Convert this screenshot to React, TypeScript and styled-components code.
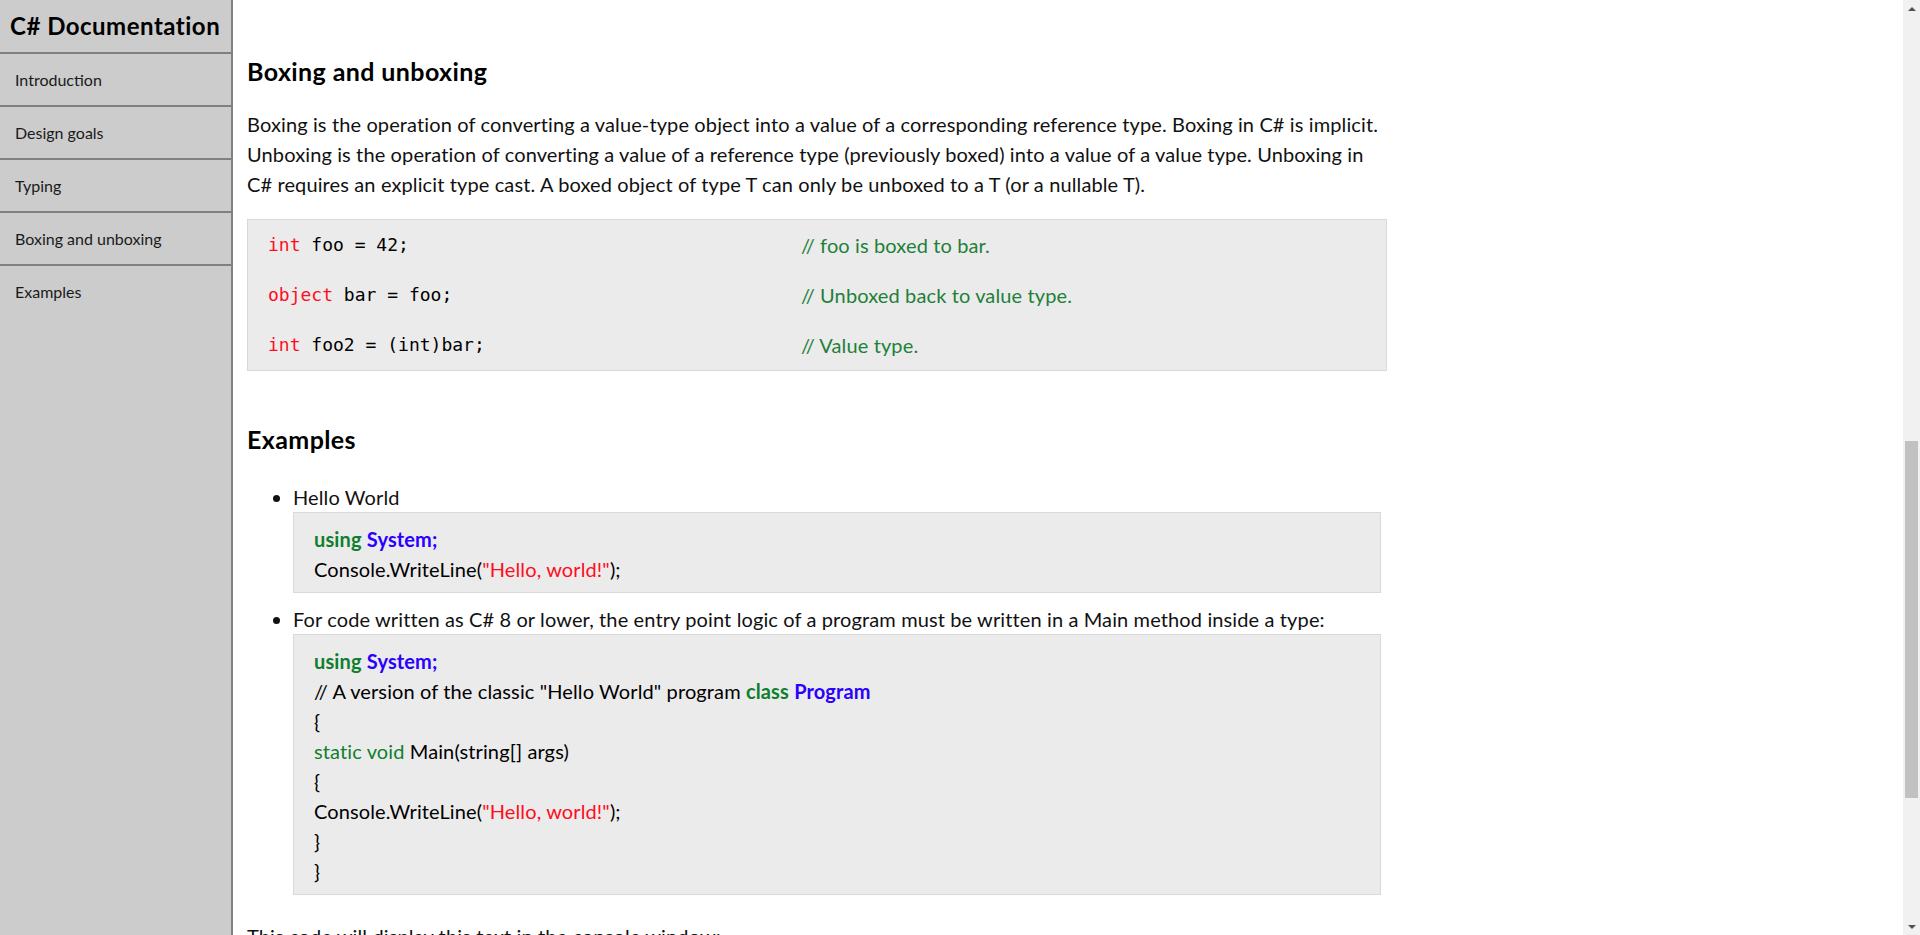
import React, { useLayoutEffect, useRef } from "react";
import styled, { createGlobalStyle } from "styled-components";

const GlobalStyle = createGlobalStyle`
  html {
    background: #ffffff;
  }
  body {
    margin: 0;
    font-family: Lato, "Open Sans", sans-serif;
    color: #111111;
    background: #ffffff;
    letter-spacing: 0.12px;
  }
`;

const Page = styled.div`
  display: block;
`;

const Sidebar = styled.nav`
  position: fixed;
  top: 0;
  left: 0;
  bottom: 0;
  width: 231px;
  background: #cccccc;
  border-right: 2px solid #808080;
  display: flex;
  flex-direction: column;
`;

const SidebarHeader = styled.header`
  padding: 10px 10px;
  font-size: 24px;
  line-height: 32px;
  font-weight: 700;
  letter-spacing: 0.5px;
  white-space: nowrap;
  color: #000000;
  border-bottom: 2px solid #808080;
`;

const NavLink = styled.a`
  display: block;
  padding: 15px 15px;
  font-size: 16px;
  line-height: 21px;
  letter-spacing: 0;
  color: #1a1a1a;
  text-decoration: none;

  & + & {
    border-top: 2px solid #808080;
  }
`;

const ScrollRail = styled.div`
  position: fixed;
  top: 0;
  right: 0;
  bottom: 0;
  width: 17px;
  background: #f1f1f1;
  display: flex;
  flex-direction: column;
`;

const RailButton = styled.div`
  height: 17px;
  display: flex;
  align-items: center;
  justify-content: center;
  flex: none;
`;

const RailThumb = styled.div<{ $offset: number; $size: number }>`
  margin: ${(p) => p.$offset}px 2px 0;
  height: ${(p) => p.$size}px;
  background: #c1c1c1;
  flex: none;
`;

const RailSpacer = styled.div`
  flex: 1;
`;

const Main = styled.main`
  margin-left: 233px;
  padding: 20px 14px 260px;
`;

const Content = styled.div`
  width: 1140px;
`;

const Section = styled.section`
  display: block;
`;

const SectionTitle = styled.h2`
  margin: 54px 0 23px;
  font-size: 25px;
  line-height: 29px;
  font-weight: 700;
  letter-spacing: 0.4px;
  color: #000000;
`;

const Paragraph = styled.p`
  margin: 0 0 20px;
  font-size: 20px;
  line-height: 30px;
`;

const InlineCode = styled.code`
  font-family: "DejaVu Sans Mono", monospace;
  font-size: 16px;
  letter-spacing: 0;
  padding: 2px 5px;
  background: #ebebeb;
  border: 1px solid #d9d9d9;
`;

const CodeTable = styled.div`
  display: grid;
  grid-template-columns: 533px 1fr;
  grid-auto-rows: 50px;
  align-items: center;
  margin: 0 0 20px;
  padding: 0 20px;
  background: #ebebeb;
  border: 1px solid #d9d9d9;
`;

const MonoCell = styled.span`
  font-family: "DejaVu Sans Mono", monospace;
  font-size: 18px;
  line-height: 30px;
  letter-spacing: 0;
  color: #000000;
  white-space: pre;
`;

const CommentCell = styled.span`
  font-size: 20px;
  line-height: 30px;
  color: #1f8039;
`;

const Keyword = styled.span<{ $tone: "red" | "green" | "blue"; $bold?: boolean }>`
  color: ${(p) =>
    p.$tone === "red" ? "#ff0d1e" : p.$tone === "green" ? "#0f7f2d" : "#2a00ff"};
  font-weight: ${(p) => (p.$bold ? 700 : 400)};
`;

const BulletList = styled.ul`
  margin: 28px 6px 26px 0;
  padding-left: 46px;
  list-style: disc;
`;

const BulletItem = styled.li`
  font-size: 20px;
  line-height: 30px;

  & + & {
    margin-top: 11px;
  }
`;

const ExampleCode = styled.div`
  padding: 11px 20px 8px;
  background: #ebebeb;
  border: 1px solid #d9d9d9;
  font-size: 20px;
  line-height: 30px;
  color: #000000;
`;

const CodeLine = styled.div`
  white-space: pre;
`;

const navItems = ["Introduction", "Design goals", "Typing", "Boxing and unboxing", "Examples"];

function Arrow({ up }: { up: boolean }) {
  return (
    <svg width="8" height="4" viewBox="0 0 8 4" aria-hidden="true">
      <polygon points={up ? "0,4 4,0 8,4" : "0,0 4,4 8,0"} fill="#505050" />
    </svg>
  );
}

export default function App() {
  const boxingRef = useRef<HTMLHeadingElement>(null);

  useLayoutEffect(() => {
    const el = boxingRef.current;
    if (el) {
      const top = el.getBoundingClientRect().top + window.scrollY - 57;
      window.scrollTo(0, top);
    }
  }, []);

  return (
    <Page>
      <GlobalStyle />
      <Sidebar id="navbar">
        <SidebarHeader>C# Documentation</SidebarHeader>
        {navItems.map((item) => (
          <NavLink key={item} href={`#${item.replace(/ /g, "_")}`}>
            {item}
          </NavLink>
        ))}
      </Sidebar>
      <ScrollRail aria-hidden="true">
        <RailButton>
          <Arrow up />
        </RailButton>
        <RailThumb $offset={424} $size={357} />
        <RailSpacer />
        <RailButton>
          <Arrow up={false} />
        </RailButton>
      </ScrollRail>
      <Main id="main-doc">
        <Content>
          <Section id="Introduction">
            <SectionTitle>Introduction</SectionTitle>
            <Paragraph>
              C# (pronounced "See Sharp") is a modern, object-oriented, and type-safe programming language. C# enables
              developers to build many types of secure and robust applications that run in .NET. C# has its roots in the C
              family of languages and will be immediately familiar to C, C++, Java, and JavaScript programmers.
            </Paragraph>
            <Paragraph>
              C# is an object-oriented, component-oriented programming language. C# provides language constructs to
              directly support these concepts, making C# a natural language in which to create and use software
              components. Since its origin, C# has added features to support new workloads and emerging software design
              practices.
            </Paragraph>
            <Paragraph>
              The most recent version of the language is C# 11, which was released in 2022 in .NET 7.0.
            </Paragraph>
          </Section>
          <Section id="Design_goals">
            <SectionTitle>Design goals</SectionTitle>
            <Paragraph>The Ecma standard lists these design goals for C#:</Paragraph>
            <BulletList>
              <BulletItem>
                The language is intended to be a simple, modern, general-purpose, object-oriented programming language.
              </BulletItem>
              <BulletItem>
                The language, and implementations thereof, should provide support for software engineering principles such
                as strong type checking, array bounds checking, detection of attempts to use uninitialized variables, and
                automatic garbage collection.
              </BulletItem>
              <BulletItem>
                The language is intended for use in developing software components suitable for deployment in distributed
                environments.
              </BulletItem>
              <BulletItem>
                Portability is very important for source code and programmers, especially those already familiar with C and
                C++.
              </BulletItem>
              <BulletItem>Support for internationalization is very important.</BulletItem>
            </BulletList>
          </Section>
          <Section id="Typing">
            <SectionTitle>Typing</SectionTitle>
            <Paragraph>
              C# supports strictly, implicitly typed variable declarations with the keyword <InlineCode>var</InlineCode>,
              and implicitly typed arrays with the keyword <InlineCode>new[]</InlineCode> followed by a collection
              initializer.
            </Paragraph>
            <Paragraph>
              It also supports <InlineCode>Nullable</InlineCode> value types via the <InlineCode>T?</InlineCode> shorthand,
              and the <InlineCode>var</InlineCode> keyword for implicitly typed local variables.
            </Paragraph>
          </Section>
          <Section id="Boxing_and_unboxing">
            <SectionTitle ref={boxingRef}>Boxing and unboxing</SectionTitle>
            <Paragraph>
              Boxing is the operation of converting a value-type object into a value of a corresponding reference type.
              Boxing in C# is implicit. Unboxing is the operation of converting a value of a reference type (previously
              boxed) into a value of a value type. Unboxing in C# requires an explicit type cast. A boxed object of type T
              can only be unboxed to a T (or a nullable T).
            </Paragraph>
            <CodeTable>
              <MonoCell>
                <Keyword $tone="red">int</Keyword> foo = 42;
              </MonoCell>
              <CommentCell>// foo is boxed to bar.</CommentCell>
              <MonoCell>
                <Keyword $tone="red">object</Keyword> bar = foo;
              </MonoCell>
              <CommentCell>// Unboxed back to value type.</CommentCell>
              <MonoCell>
                <Keyword $tone="red">int</Keyword> foo2 = (int)bar;
              </MonoCell>
              <CommentCell>// Value type.</CommentCell>
            </CodeTable>
          </Section>
          <Section id="Examples">
            <SectionTitle>Examples</SectionTitle>
            <BulletList>
              <BulletItem>
                Hello World
                <ExampleCode>
                  <CodeLine>
                    <Keyword $tone="green" $bold>using</Keyword> <Keyword $tone="blue" $bold>System;</Keyword>
                  </CodeLine>
                  <CodeLine>
                    Console.WriteLine(<Keyword $tone="red">"Hello, world!"</Keyword>);
                  </CodeLine>
                </ExampleCode>
              </BulletItem>
              <BulletItem>
                For code written as C# 8 or lower, the entry point logic of a program must be written in a Main method
                inside a type:
                <ExampleCode>
                  <CodeLine>
                    <Keyword $tone="green" $bold>using</Keyword> <Keyword $tone="blue" $bold>System;</Keyword>
                  </CodeLine>
                  <CodeLine>
                    // A version of the classic "Hello World" program <Keyword $tone="green" $bold>class</Keyword>{" "}
                    <Keyword $tone="blue" $bold>Program</Keyword>
                  </CodeLine>
                  <CodeLine>{"{"}</CodeLine>
                  <CodeLine>
                    <Keyword $tone="green">static void</Keyword> Main(string[] args)
                  </CodeLine>
                  <CodeLine>{"{"}</CodeLine>
                  <CodeLine>
                    Console.WriteLine(<Keyword $tone="red">"Hello, world!"</Keyword>);
                  </CodeLine>
                  <CodeLine>{"}"}</CodeLine>
                  <CodeLine>{"}"}</CodeLine>
                </ExampleCode>
              </BulletItem>
            </BulletList>
            <Paragraph>This code will display this text in the console window:</Paragraph>
            <ExampleCode>
              <CodeLine>Hello, world!</CodeLine>
            </ExampleCode>
          </Section>
        </Content>
      </Main>
    </Page>
  );
}
